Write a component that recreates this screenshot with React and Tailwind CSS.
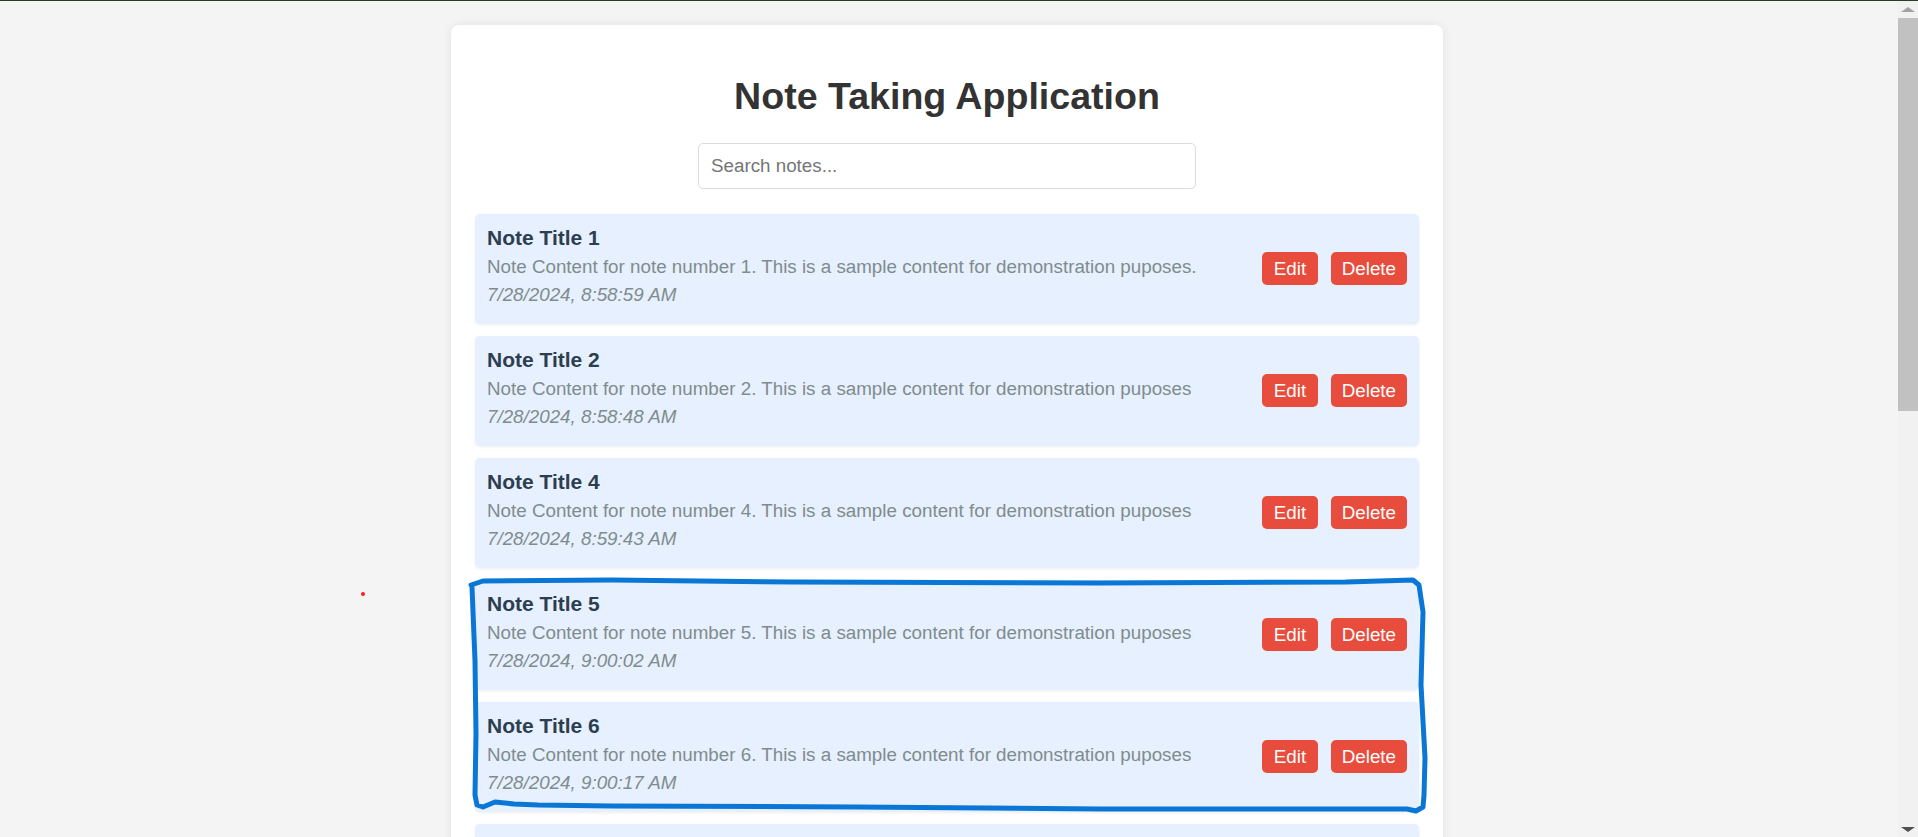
import React, { useState } from 'react';

const initialNotes = [
  { id: 1, title: 'Note Title 1', content: 'Note Content for note number 1. This is a sample content for demonstration puposes.', date: '7/28/2024, 8:58:59 AM' },
  { id: 2, title: 'Note Title 2', content: 'Note Content for note number 2. This is a sample content for demonstration puposes', date: '7/28/2024, 8:58:48 AM' },
  { id: 4, title: 'Note Title 4', content: 'Note Content for note number 4. This is a sample content for demonstration puposes', date: '7/28/2024, 8:59:43 AM' },
  { id: 5, title: 'Note Title 5', content: 'Note Content for note number 5. This is a sample content for demonstration puposes', date: '7/28/2024, 9:00:02 AM' },
  { id: 6, title: 'Note Title 6', content: 'Note Content for note number 6. This is a sample content for demonstration puposes', date: '7/28/2024, 9:00:17 AM' },
  { id: 7, title: 'Note Title 7', content: 'Note Content for note number 7. This is a sample content for demonstration puposes', date: '7/28/2024, 9:00:31 AM' },
  { id: 8, title: 'Note Title 8', content: 'Note Content for note number 8. This is a sample content for demonstration puposes', date: '7/28/2024, 9:00:46 AM' },
  { id: 9, title: 'Note Title 9', content: 'Note Content for note number 9. This is a sample content for demonstration puposes', date: '7/28/2024, 9:01:02 AM' },
];

// hand-drawn highlight around notes 5 and 6
const scribble =
  'M471 585 L483 581 L612 580 L795 582 L1101 583 L1346 582 L1413 580 L1419 585 L1423 612 L1421 685 L1425 758 L1424 795 L1423 807 L1416 811 L1407 809 L1346 809 L1101 809 L856 807 L612 806 L538 805 L514 804 L495 802 L483 807 L477 805 L475 795 L476 734 L475 661 L472 587';

export default function App() {
  const [notes] = useState(initialNotes);
  const [query, setQuery] = useState('');

  const shown = notes.filter(
    (n) => n.title.toLowerCase().includes(query.toLowerCase()) || n.content.toLowerCase().includes(query.toLowerCase())
  );

  return (
    <div className="relative h-screen overflow-hidden flex flex-col font-['Liberation_Sans',Arial,sans-serif]">
      <div className="h-px bg-[#2d3a2b] shrink-0" />
      <div className="flex flex-1 min-h-0">
        {/* page */}
        <div className="flex-1 overflow-hidden bg-[#f4f4f4] pt-[24px] flex justify-center pr-[4px]">
          <div className="w-[992px] shrink-0 self-start bg-white rounded-lg shadow-[0_0_10px_rgba(0,0,0,0.08)] px-[24px] pt-[24px] pb-[24px]">
            <h1 className="mt-[25.5px] mb-[26px] text-center text-[37.6px] font-bold text-[#333] leading-[42px]">
              Note Taking Application
            </h1>
            <input
              value={query}
              onChange={(e) => setQuery(e.target.value)}
              placeholder="Search notes..."
              className="block mx-auto mb-[25px] w-[498px] h-[46px] border border-[#dcdcdc] rounded-[5px] px-[12px] text-[18.8px] text-[#333] placeholder:text-[#757575] outline-none"
            />
            <div className="flex flex-col gap-[12px]">
              {shown.map((note) => (
                <div
                  key={note.id}
                  className="flex items-center justify-between bg-[#e7f0fe] rounded-[5px] px-[12px] py-[12px] shadow-[0_1px_3px_rgba(0,0,0,0.07)]"
                >
                  <div>
                    <h3 className="text-[21px] leading-[24px] font-bold text-[#2c3e50]">{note.title}</h3>
                    <p className="mt-[6px] text-[18.8px] leading-[22px] text-[#7f8c8d]">{note.content}</p>
                    <p className="mt-[6px] mb-[6px] text-[18.8px] leading-[22px] italic text-[#7f8c8d]">{note.date}</p>
                  </div>
                  <div className="flex items-center gap-[13px]">
                    <button className="h-[33px] px-[11.5px] bg-[#e74c3c] text-white text-[18.8px] leading-[22px] rounded-[5px]">
                      Edit
                    </button>
                    <button className="h-[33px] px-[11px] bg-[#e74c3c] text-white text-[18.8px] leading-[22px] rounded-[5px]">
                      Delete
                    </button>
                  </div>
                </div>
              ))}
            </div>
          </div>
        </div>

        {/* scrollbar */}
        <div className="w-[20px] shrink-0 bg-[#f1f1f1] flex flex-col">
          <div className="h-[17px] flex items-center justify-center">
            <div className="w-0 h-0 border-l-[7px] border-r-[7px] border-b-[5px] border-l-transparent border-r-transparent border-b-[#a3a3a3]" />
          </div>
          <div className="h-[393px] bg-[#c1c1c1]" />
          <div className="flex-1" />
          <div className="h-[16px] flex items-center justify-center">
            <div className="w-0 h-0 border-l-[7px] border-r-[7px] border-t-[5px] border-l-transparent border-r-transparent border-t-[#505050]" />
          </div>
        </div>
      </div>

      {/* overlays: annotation stroke and stray cursor dot */}
      <svg className="absolute left-0 top-0 pointer-events-none" width="1918" height="837">
        <path d={scribble} fill="none" stroke="#0a76d6" strokeWidth="5" strokeLinejoin="round" strokeLinecap="round" />
      </svg>
      <div className="absolute left-[361px] top-[592px] w-[4px] h-[4px] rounded-full bg-[#ff1a1a]" />
    </div>
  );
}
